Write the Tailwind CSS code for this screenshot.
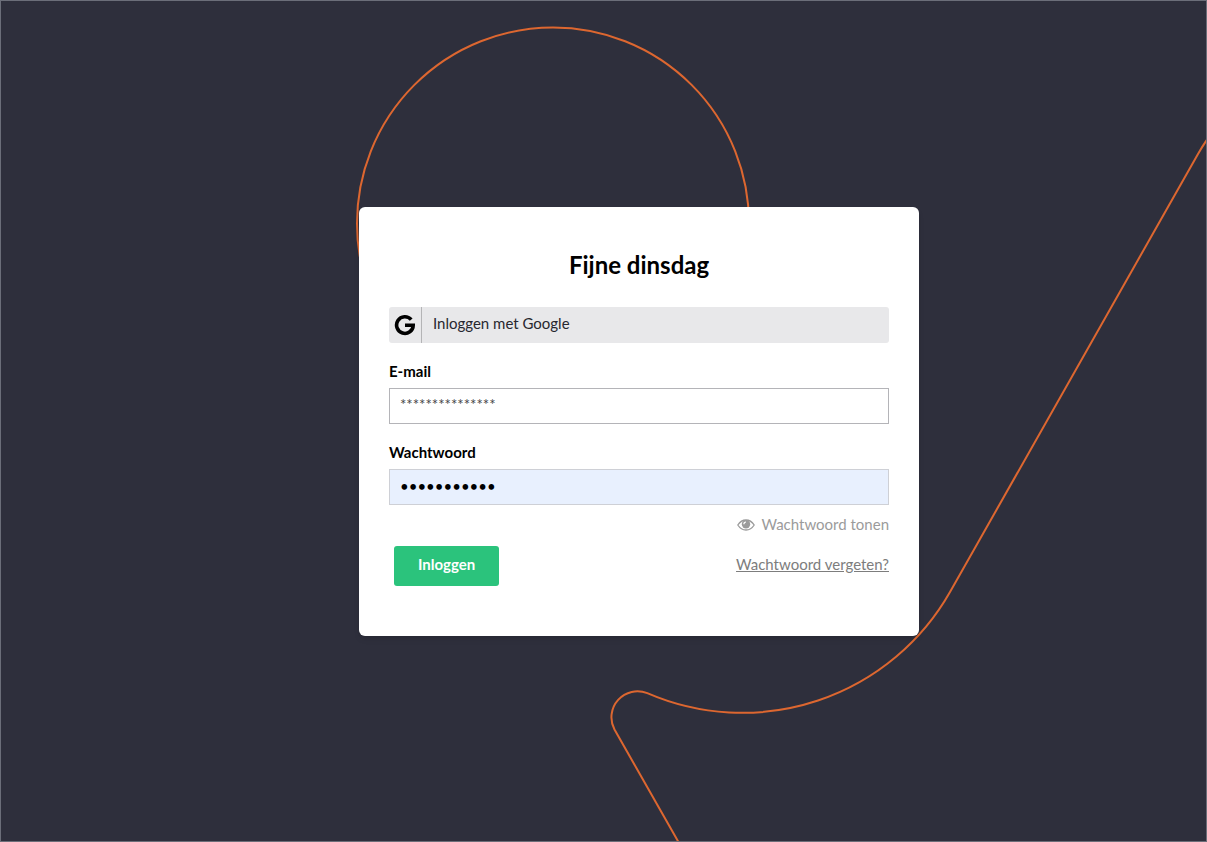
<!DOCTYPE html>
<html lang="nl">
<head>
    <meta charset="UTF-8">
    <meta name="viewport" content="width=device-width, initial-scale=1.0">
    <title>Inloggen</title>
    <script src="https://cdn.jsdelivr.net/npm/@tailwindcss/browser@4"></script>
</head>
<body class="bg-[#2e2f3c] font-['Lato',sans-serif] text-[15px] leading-5 text-black">
    <div class="relative flex min-h-screen items-center justify-center overflow-hidden border border-[#6b6e79] pl-[71px]">
        <!-- background line -->
        <svg class="absolute -top-px -left-px h-[842px] w-[1207px]" viewBox="0 0 1207 842" fill="none" stroke="#dd6730" stroke-width="2" aria-hidden="true">
            <circle cx="553" cy="223.500" r="196"/>
            <path d="M1215 129Q1206 140 1198 154L950 592A239 239 0 0 1 647.300 693.200A26 26 0 0 0 614.500 729.500L683 850"/>
        </svg>

        <main class="relative w-full max-w-[560px] rounded-md bg-white px-[30px] pt-[42px] pb-[50px] shadow-md">
            <h1 class="mb-[26px] text-center text-2xl font-bold">Fijne dinsdag</h1>

            <form onsubmit="return false">
                <button type="button" class="flex h-9 w-full items-stretch rounded-[3px] bg-[#e8e8ea] text-left text-[#27272f]">
                    <span class="flex w-[33px] items-center justify-center border-r border-[#b4b4b6]">
                        <svg class="h-[22px] w-[22px]" viewBox="0 0 22 22" fill="none" stroke="#000" stroke-width="3.600" aria-hidden="true">
                            <path d="M17.200 5.700A8.300 8.300 0 1 0 19.200 11.200H11"/>
                        </svg>
                    </span>
                    <span class="px-[11px] py-[6px]">Inloggen met Google</span>
                </button>

                <label for="email" class="mt-[18px] mb-[7px] block font-bold">E-mail</label>
                <input id="email" type="text" value="***************" class="block h-9 w-full border border-[#b4b4b8] px-[10px] pb-1 text-[#444] outline-none">

                <label for="password" class="mt-[18px] mb-[7px] block font-bold">Wachtwoord</label>
                <input id="password" type="password" value="wachtwoord1" class="block h-9 w-full border border-[#ced0d6] bg-[#e8f0fe] px-[10px] pb-[2px] outline-none">

                <div class="mt-[9px] flex justify-end">
                    <button type="button" onclick="togglePassword()" class="flex items-center gap-[6px] text-[#9b9b9b]">
                        <svg class="mt-[3px] h-3 w-[18px]" viewBox="0 0 18 12" aria-hidden="true">
                            <path d="M.8 6C3 2.600 5.800 1 9 1S15 2.600 17.200 6C15 9.400 12.200 11 9 11S3 9.400 .8 6Z" fill="none" stroke="#9b9b9b" stroke-width="1.300"/>
                            <circle cx="9" cy="5.200" r="4.200" fill="#9b9b9b"/>
                            <path d="M6.900 5.200A2.200 2.200 0 0 1 9 3" fill="none" stroke="#fff" stroke-width="1.200"/>
                        </svg>
                        Wachtwoord tonen
                    </button>
                </div>

                <div class="mt-3 flex items-start justify-between pl-[5px]">
                    <button type="submit" class="h-10 rounded-[3px] bg-[#2bc37c] px-6 pb-1 font-bold text-white">Inloggen</button>
                    <a href="#" class="mt-2 text-[#7d7d7d] underline">Wachtwoord vergeten?</a>
                </div>
            </form>
        </main>
    </div>

    <script>
        function togglePassword() {
            let field = document.getElementById('password');
            field.type = field.type === 'password' ? 'text' : 'password';
        }
    </script>
</body>
</html>
